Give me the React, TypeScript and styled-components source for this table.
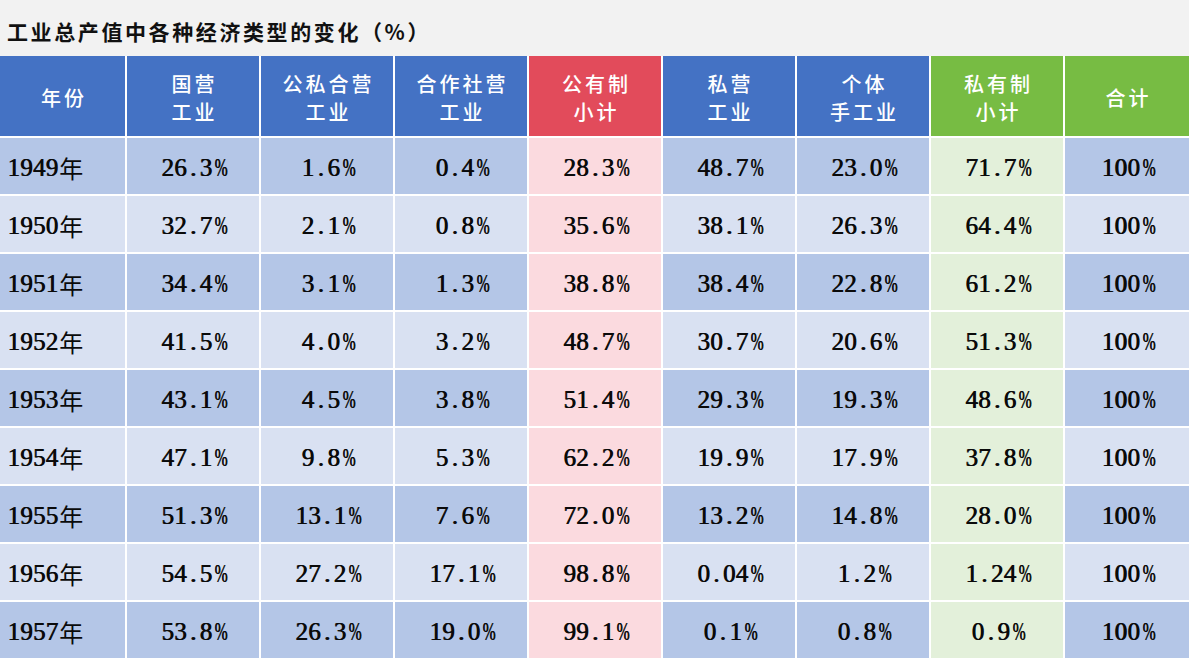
import React from "react";
import styled, { createGlobalStyle, css } from "styled-components";

const GlobalStyle = createGlobalStyle`
  html, body { margin: 0; padding: 0; background: #ffffff; }
  body { font-family: "Noto Sans CJK SC", "Noto Sans", sans-serif; }
`;

type HeadTone = "blue" | "red" | "green";
type BodyTone = "auto" | "pink" | "green";

const headColors: Record<HeadTone, string> = {
  blue: "#4472c4",
  red: "#e24b5b",
  green: "#77bc43",
};

const Page = styled.div`
  width: 1189px;
  height: 659px;
  overflow: hidden;
  background: #ffffff;
  display: flex;
  flex-direction: column;
`;

const TitleBar = styled.div`
  height: 56px;
  flex: none;
  background: #f2f2f2;
  display: flex;
  align-items: center;
  padding: 5px 0 0 7px;
  box-sizing: border-box;
  font-family: "Noto Sans CJK SC", sans-serif;
  font-weight: 700;
  font-size: 21px;
  letter-spacing: 2.6px;
  color: #111;
`;

const Grid = styled.div`
  display: grid;
  grid-template-columns: 125px repeat(7, 132px) 1fr;
  grid-template-rows: 80px repeat(9, 56px);
  column-gap: 2px;
  row-gap: 2px;
  background: #ffffff;
`;

const HeadCell = styled.div<{ $tone: HeadTone }>`
  background: ${(p) => headColors[p.$tone]};
  color: #ffffff;
  display: flex;
  flex-direction: column;
  align-items: center;
  justify-content: center;
  padding-top: 4px;
  box-sizing: border-box;
  font-family: "Noto Sans CJK SC", sans-serif;
  font-weight: 500;
  font-size: 20px;
  line-height: 28px;
  letter-spacing: 3px;
  text-indent: 3px;
`;

const BodyCell = styled.div<{ $tone: BodyTone; $odd: boolean; $left?: boolean }>`
  display: flex;
  align-items: center;
  justify-content: ${(p) => (p.$left ? "flex-start" : "center")};
  padding-left: ${(p) => (p.$left ? "7px" : "0")};
  padding-top: 3px;
  box-sizing: border-box;
  color: #0a0a0a;
  ${(p) =>
    p.$tone === "pink"
      ? css`background: #fbdadf;`
      : p.$tone === "green"
      ? css`background: #e3f0da;`
      : p.$odd
      ? css`background: #b4c6e7;`
      : css`background: #d9e1f2;`}
`;

const Glyph = styled.span<{ $pct?: boolean }>`
  display: inline-block;
  width: 12.8px;
  text-align: center;
  font-family: "Liberation Serif", "Times New Roman", serif;
  font-weight: 400;
  font-size: 25px;
  line-height: 28px;
  text-shadow: 0.8px 0 0 #0a0a0a;
  ${(p) =>
    p.$pct &&
    css`
      transform: scaleX(0.62);
      transform-origin: center;
    `}
`;

const Han = styled.span`
  display: inline-block;
  font-family: "Noto Sans CJK SC", sans-serif;
  font-weight: 400;
  font-size: 24px;
  line-height: 28px;
  margin-left: 1px;
`;

const Mono: React.FC<{ text: string }> = ({ text }) => (
  <>
    {text.split("").map((c, i) =>
      /[0-9.%]/.test(c) ? (
        <Glyph key={i} $pct={c === "%"}>
          {c}
        </Glyph>
      ) : (
        <Han key={i}>{c}</Han>
      )
    )}
  </>
);

const columns: { label: string[]; head: HeadTone; body: BodyTone }[] = [
  { label: ["年份"], head: "blue", body: "auto" },
  { label: ["国营", "工业"], head: "blue", body: "auto" },
  { label: ["公私合营", "工业"], head: "blue", body: "auto" },
  { label: ["合作社营", "工业"], head: "blue", body: "auto" },
  { label: ["公有制", "小计"], head: "red", body: "pink" },
  { label: ["私营", "工业"], head: "blue", body: "auto" },
  { label: ["个体", "手工业"], head: "blue", body: "auto" },
  { label: ["私有制", "小计"], head: "green", body: "green" },
  { label: ["合计"], head: "green", body: "auto" },
];

const rows: string[][] = [
  ["1949年", "26.3%", "1.6%", "0.4%", "28.3%", "48.7%", "23.0%", "71.7%", "100%"],
  ["1950年", "32.7%", "2.1%", "0.8%", "35.6%", "38.1%", "26.3%", "64.4%", "100%"],
  ["1951年", "34.4%", "3.1%", "1.3%", "38.8%", "38.4%", "22.8%", "61.2%", "100%"],
  ["1952年", "41.5%", "4.0%", "3.2%", "48.7%", "30.7%", "20.6%", "51.3%", "100%"],
  ["1953年", "43.1%", "4.5%", "3.8%", "51.4%", "29.3%", "19.3%", "48.6%", "100%"],
  ["1954年", "47.1%", "9.8%", "5.3%", "62.2%", "19.9%", "17.9%", "37.8%", "100%"],
  ["1955年", "51.3%", "13.1%", "7.6%", "72.0%", "13.2%", "14.8%", "28.0%", "100%"],
  ["1956年", "54.5%", "27.2%", "17.1%", "98.8%", "0.04%", "1.2%", "1.24%", "100%"],
  ["1957年", "53.8%", "26.3%", "19.0%", "99.1%", "0.1%", "0.8%", "0.9%", "100%"],
];

export default function App() {
  return (
    <>
      <GlobalStyle />
      <Page>
        <TitleBar>工业总产值中各种经济类型的变化（%）</TitleBar>
        <Grid>
          {columns.map((c, i) => (
            <HeadCell key={`h${i}`} $tone={c.head}>
              {c.label.map((l) => (
                <div key={l}>{l}</div>
              ))}
            </HeadCell>
          ))}
          {rows.map((r, ri) =>
            r.map((v, ci) => (
              <BodyCell
                key={`${ri}-${ci}`}
                $tone={columns[ci].body}
                $odd={ri % 2 === 0}
                $left={ci === 0}
              >
                <Mono text={v} />
              </BodyCell>
            ))
          )}
        </Grid>
      </Page>
    </>
  );
}
